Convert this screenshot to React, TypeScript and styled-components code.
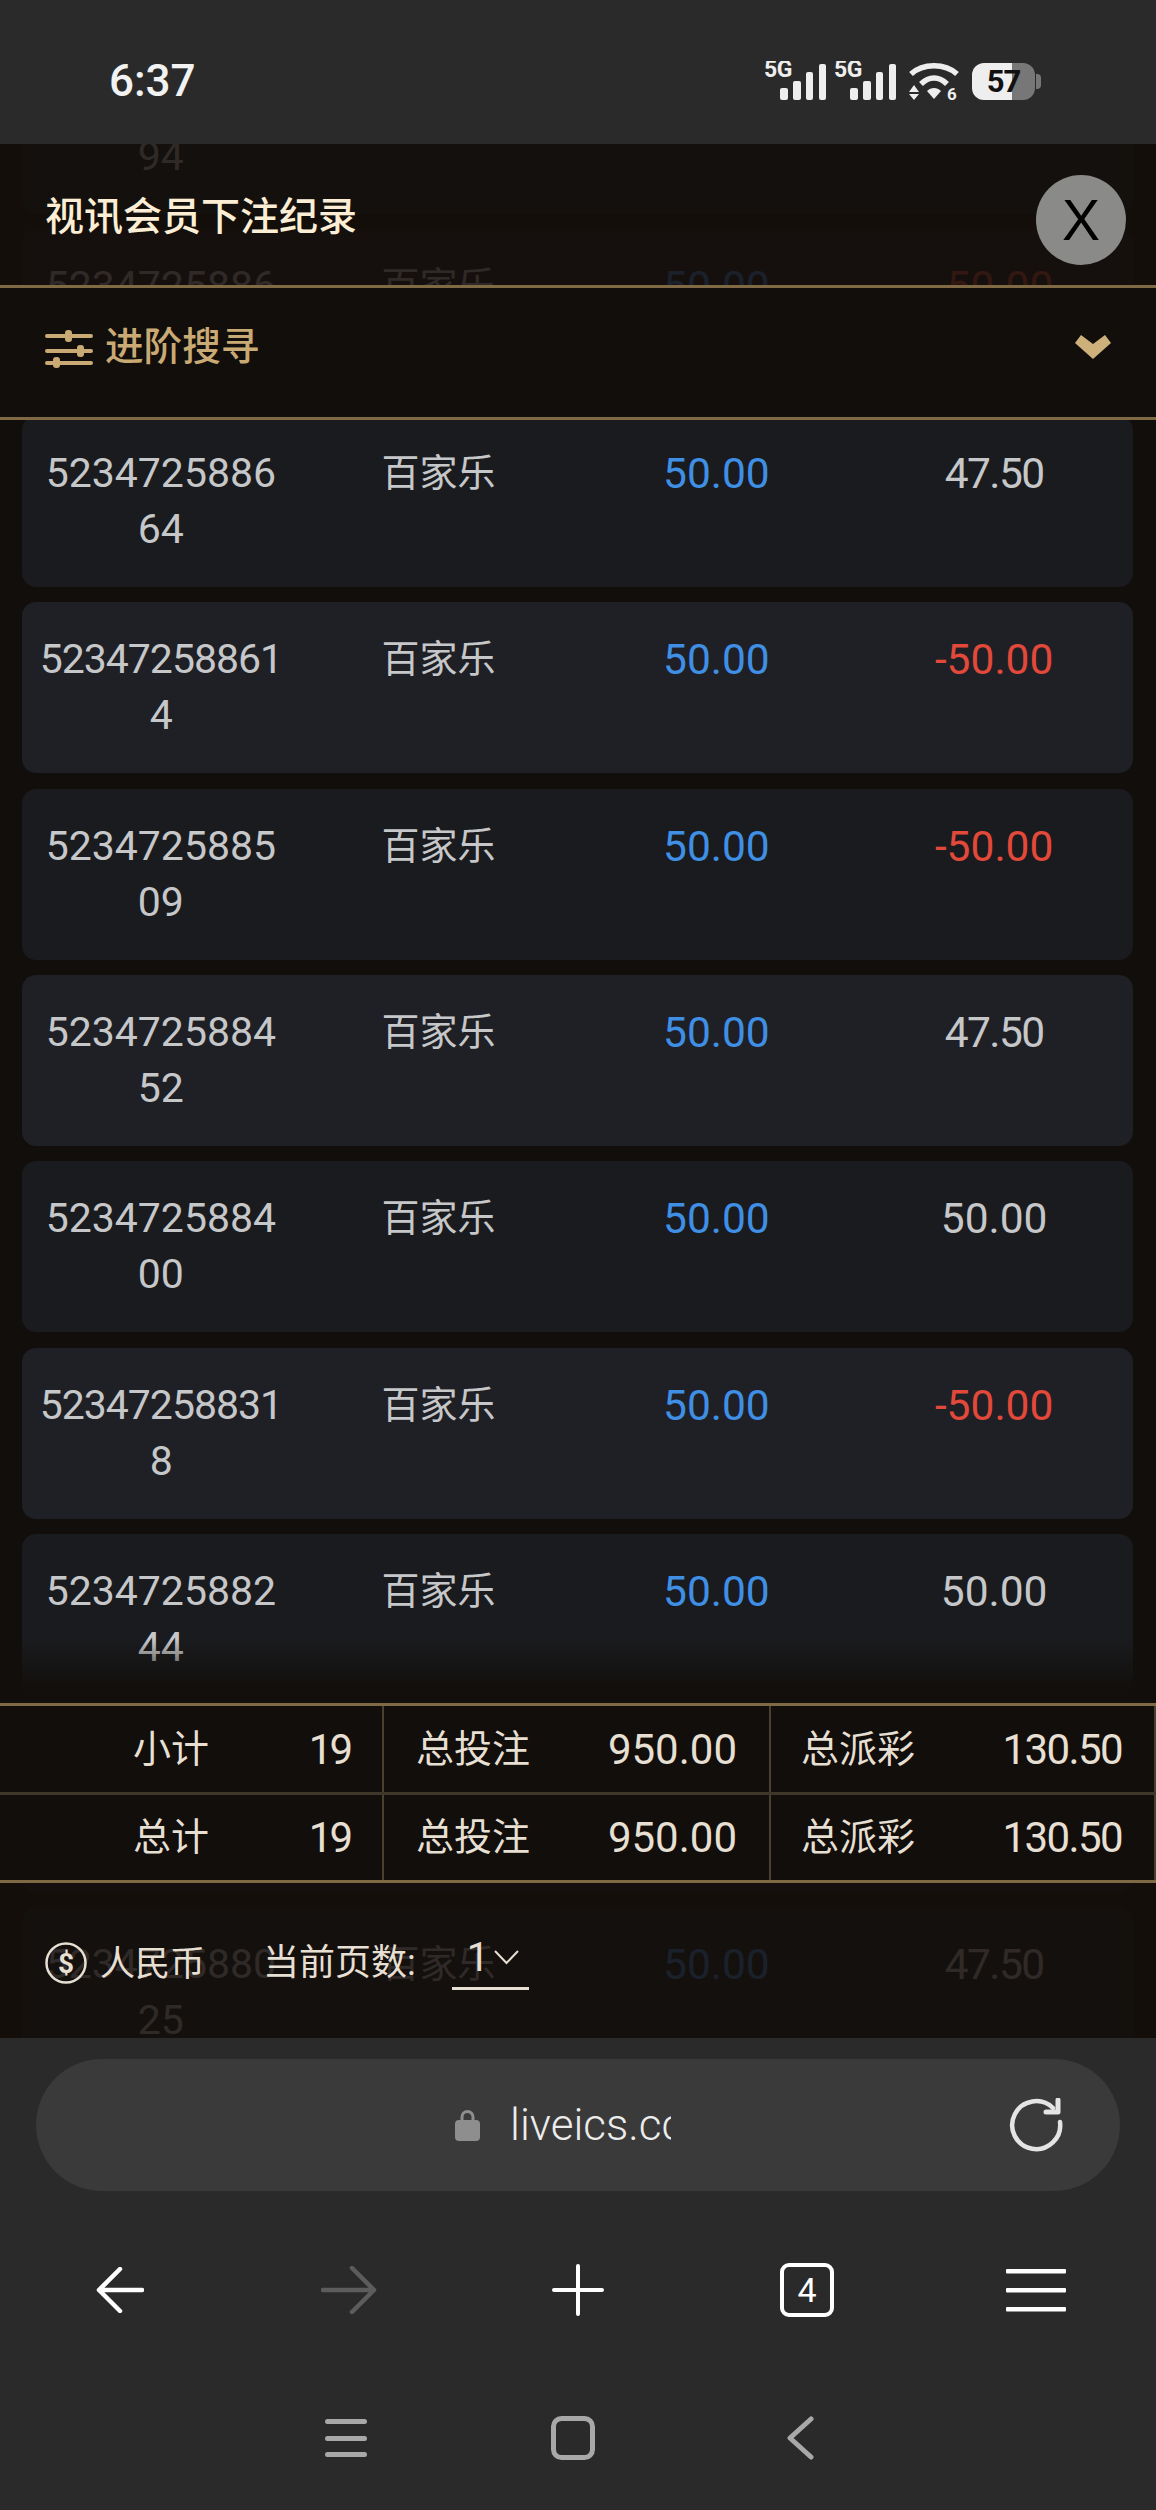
import styled, { createGlobalStyle } from 'styled-components'

const GlobalStyle = createGlobalStyle`
  html, body {
    margin: 0;
    padding: 0;
    background: #2a2a2a;
  }
`

const Phone = styled.div`
  width: 1156px;
  height: 2510px;
  display: flex;
  flex-direction: column;
  overflow: hidden;
  background: #2a2a2a;
  font-family: Roboto, 'Noto Sans CJK SC', sans-serif;
`

const StatusBar = styled.div`
  height: 144px;
  flex: none;
  box-sizing: border-box;
  padding: 18px 121px 0 109px;
  display: flex;
  justify-content: space-between;
  align-items: center;
  background: #2a2a2a;
  position: relative;
  z-index: 3;
`

const Clock = styled.div`
  font-size: 44px;
  font-weight: 500;
  color: #f2f2f2;
`

const StatusIcons = styled.div`
  display: flex;
  align-items: center;
  gap: 9px;
`

const Battery = styled.div`
  position: relative;
  width: 63px;
  height: 37px;
  margin-left: 3px;
  border-radius: 12px;
  background: linear-gradient(90deg, #eeeeee 63%, #777777 63%);
  color: #111;
  font-size: 31px;
  font-weight: 700;
  line-height: 38px;
  text-align: center;
  letter-spacing: -1px;

  &::after {
    content: '';
    position: absolute;
    right: -6px;
    top: 11px;
    width: 5px;
    height: 15px;
    border-radius: 0 4px 4px 0;
    background: #777777;
  }
`

const Stage = styled.div`
  position: relative;
  flex: 1;
  overflow: hidden;
  background: #110e0b;
`

const RowList = styled.div`
  margin-top: -101px;
  padding: 0 23px 0 22px;
  display: flex;
  flex-direction: column;
  gap: 15.4px;
`

const Row = styled.div<{ $alt: boolean }>`
  height: 171px;
  flex: none;
  box-sizing: border-box;
  padding-top: 29px;
  display: grid;
  grid-template-columns: repeat(4, 1fr);
  border-radius: 14px;
  background: ${(p) => (p.$alt ? '#1f2025' : '#1a1b1e')};
  text-align: center;
  font-size: 41px;
  line-height: 56px;
  color: #c6c7c9;
`

const OrderId = styled.div<{ $long: boolean }>`
  letter-spacing: ${(p) => (p.$long ? '-1px' : '0')};
`

const GameName = styled.div`
  font-size: 38px;
`

const BetAmount = styled.div`
  margin-top: 1px;
  font-size: 42.5px;
  color: #3f8fe5;
`

const Payout = styled.div<{ $loss: boolean; $narrow: boolean }>`
  margin-top: 1px;
  font-size: 42.5px;
  letter-spacing: ${(p) => (p.$narrow ? '-1.6px' : '0')};
  color: ${(p) => (p.$loss ? '#e2493a' : '#c6c7c9')};
`

const TopPanel = styled.div`
  position: absolute;
  top: 0;
  left: 0;
  right: 0;
`

const TitleBar = styled.div`
  height: 141px;
  box-sizing: border-box;
  padding: 10px 30px 0 45px;
  display: flex;
  justify-content: space-between;
  align-items: center;
  background: rgba(20, 14, 10, 0.85);
`

const Title = styled.div`
  margin-top: -14px;
  font-size: 39px;
  font-weight: 500;
  color: #fbeed5;
`

const CloseButton = styled.div`
  width: 90px;
  height: 90px;
  border-radius: 50%;
  background: #8a8a88;
  color: #000;
  font-family: 'Liberation Sans', sans-serif;
  font-size: 57px;
  line-height: 90px;
  text-align: center;
`

const SearchBar = styled.div`
  height: 135px;
  box-sizing: border-box;
  padding: 0 45px 8px 45px;
  display: flex;
  align-items: center;
  gap: 12px;
  border-top: 3px solid #7f6a45;
  border-bottom: 3px solid #7f6a45;
  background: #110e0b;
  color: #c9a974;
`

const SearchLabel = styled.span`
  padding-bottom: 12px;
  font-size: 38.6px;
  font-weight: 500;
`

const SearchChevron = styled.svg`
  margin: -4px 0 0 auto;
`

const BottomPanel = styled.div`
  position: absolute;
  left: 0;
  right: 0;
  bottom: 0;
`

const Fade = styled.div`
  height: 64px;
  background: linear-gradient(180deg, rgba(17, 14, 11, 0) 0%, #110e0b 85%);
`

const Summary = styled.div`
  border-top: 3px solid #7f6a45;
  border-bottom: 3px solid #7f6a45;
  background: #110e0b;
`

const SummaryRow = styled.div<{ $divided?: boolean }>`
  height: ${(p) => (p.$divided ? '89px' : '85px')};
  box-sizing: border-box;
  display: grid;
  grid-template-columns: 384px 387px 385px;
  border-bottom: ${(p) => (p.$divided ? '3px solid #3f3729' : 'none')};
`

const SummaryCell = styled.div<{ $inset?: number }>`
  box-sizing: border-box;
  padding: 0 32px 0 ${(p) => p.$inset ?? 32}px;
  display: flex;
  justify-content: space-between;
  align-items: center;
  border-right: 2px solid #4a4030;
  color: #e6dfd2;
  font-size: 42px;
`

const SummaryLabel = styled.span`
  padding-bottom: 8px;
  font-size: 38px;
`

const SummaryValue = styled.span<{ $tight?: number }>`
  letter-spacing: ${(p) => p.$tight ?? 0}px;
`

const Pager = styled.div`
  height: 155px;
  box-sizing: border-box;
  padding: 5px 0 0 45px;
  display: flex;
  align-items: center;
  background: rgba(20, 14, 10, 0.85);
  color: #e6dfd2;
  font-size: 35px;
`

const CurrencyLabel = styled.span`
  margin-left: 13px;
  margin-right: 58px;
  padding-bottom: 6px;
`

const PageLabel = styled.span`
  padding-bottom: 8px;
  font-size: 36px;
`

const PageSelect = styled.div`
  width: 77px;
  height: 54px;
  box-sizing: border-box;
  margin-left: 36px;
  padding: 0 10px 8px 15px;
  display: flex;
  justify-content: space-between;
  align-items: center;
  border-bottom: 3px solid #e6dfd2;
  font-size: 40px;
`

const BrowserChrome = styled.div`
  height: 472px;
  flex: none;
  box-sizing: border-box;
  padding-top: 21px;
  display: flex;
  flex-direction: column;
  background: #2a2a2a;
  position: relative;
  z-index: 3;
`

const UrlBar = styled.div`
  height: 132px;
  margin: 0 36px;
  padding: 0 57px 0 419px;
  display: flex;
  align-items: center;
  border-radius: 66px;
  background: #3a3a3a;
`

const UrlText = styled.div`
  width: 161px;
  margin-left: 30px;
  overflow: hidden;
  white-space: nowrap;
  font-size: 44px;
  font-weight: 350;
  color: #ececec;
`

const ReloadIcon = styled.svg`
  margin-left: auto;
`

const NavRow = styled.div`
  height: 100px;
  margin-top: 49px;
  padding: 0 70px;
  display: flex;
  justify-content: space-between;
`

const NavSlot = styled.div`
  width: 100px;
  height: 100px;
  display: flex;
  align-items: center;
  justify-content: center;
`

const TabCount = styled.div`
  width: 54px;
  height: 54px;
  box-sizing: border-box;
  border: 4px solid #fff;
  border-radius: 9px;
  color: #fff;
  font-size: 34px;
  line-height: 46px;
  text-align: center;
`

const SystemNav = styled.div`
  height: 80px;
  margin-top: 58px;
  padding-right: 10px;
  display: flex;
  justify-content: center;
  gap: 127px;
`

const SystemSlot = styled(NavSlot)`
  height: 80px;
`

const records = [
  { id: ['5234725886', '94'], pay: '50.00' },
  { id: ['5234725886', '32'], pay: '-50.00' },
  { id: ['5234725886', '64'], pay: '47.50' },
  { id: ['52347258861', '4'], pay: '-50.00' },
  { id: ['5234725885', '09'], pay: '-50.00' },
  { id: ['5234725884', '52'], pay: '47.50' },
  { id: ['5234725884', '00'], pay: '50.00' },
  { id: ['52347258831', '8'], pay: '-50.00' },
  { id: ['5234725882', '44'], pay: '50.00' },
  { id: ['5234725881', '70'], pay: '50.00' },
  { id: ['5234725880', '25'], pay: '47.50' },
]

const summary = [
  { label: '小计', count: '19' },
  { label: '总计', count: '19' },
]

const Signal = () => (
  <svg width="61" height="40" viewBox="0 0 61 40" fill="#eeeeee">
    <text x="-1" y="16" fontFamily="Roboto, sans-serif" fontSize="23" fontWeight="700" letterSpacing="-0.5">
      5G
    </text>
    <rect x="15" y="27" width="8" height="12" rx="2" />
    <rect x="28" y="20" width="8" height="19" rx="2" />
    <rect x="41" y="11" width="7" height="28" rx="2" />
    <rect x="54" y="3" width="7" height="36" rx="2" />
  </svg>
)

const Wifi = () => (
  <svg width="55" height="42" viewBox="0 0 55 42" fill="#eeeeee">
    <path d="M6 14C18 3 40 3 52 14" fill="none" stroke="#eeeeee" strokeWidth="5.5" />
    <path d="M16 24C24 16 34 16 42 24" fill="none" stroke="#eeeeee" strokeWidth="5.5" />
    <path d="M22 31C26 27 32 27 36 31L29 39Z" />
    <path d="M4 32H14L9 25ZM4 34H14L9 40Z" />
    <text x="42" y="40" fontFamily="Roboto, sans-serif" fontSize="17" fontWeight="700">
      6
    </text>
  </svg>
)

const SlidersIcon = () => (
  <svg width="48" height="38" viewBox="0 0 48 38" fill="#c9a974">
    <rect x="0" y="4" width="48" height="4" rx="2" />
    <rect x="0" y="19" width="48" height="4" rx="2" />
    <rect x="0" y="31" width="48" height="4" rx="2" />
    <rect x="20" y="0" width="7" height="12" rx="3" />
    <rect x="32" y="15" width="7" height="12" rx="3" />
    <rect x="8" y="27" width="7" height="11" rx="3" />
  </svg>
)

const DollarIcon = () => (
  <svg width="42" height="42" viewBox="0 0 42 42">
    <circle cx="21" cy="21" r="19.5" fill="none" stroke="#e6dfd2" strokeWidth="2.5" />
    <text
      x="21"
      y="31"
      textAnchor="middle"
      fontFamily="Roboto, sans-serif"
      fontSize="28"
      fontWeight="700"
      fill="#e6dfd2"
    >
      $
    </text>
  </svg>
)

const App = () => {
  return (
    <Phone>
      <GlobalStyle />
      <StatusBar>
        <Clock>6:37</Clock>
        <StatusIcons>
          <Signal />
          <Signal />
          <Wifi />
          <Battery>57</Battery>
        </StatusIcons>
      </StatusBar>

      <Stage>
        <RowList>
          {records.map((r, i) => (
            <Row key={i} $alt={i % 2 === 1}>
              <OrderId $long={r.id[0].length > 10}>
                {r.id[0]}
                <br />
                {r.id[1]}
              </OrderId>
              <GameName>百家乐</GameName>
              <BetAmount>50.00</BetAmount>
              <Payout $loss={r.pay.startsWith('-')} $narrow={r.pay === '47.50'}>
                {r.pay}
              </Payout>
            </Row>
          ))}
        </RowList>

        <TopPanel>
          <TitleBar>
            <Title>视讯会员下注纪录</Title>
            <CloseButton>X</CloseButton>
          </TitleBar>
          <SearchBar>
            <SlidersIcon />
            <SearchLabel>进阶搜寻</SearchLabel>
            <SearchChevron width="36" height="24" viewBox="0 0 36 24" fill="#cdb07a">
              <path d="M0 8L6 0L18 9L30 0L36 8L18 24Z" />
            </SearchChevron>
          </SearchBar>
        </TopPanel>

        <BottomPanel>
          <Fade />
          <Summary>
            {summary.map((s, i) => (
              <SummaryRow key={s.label} $divided={i === 0}>
                <SummaryCell $inset={133}>
                  <SummaryLabel>{s.label}</SummaryLabel>
                  <SummaryValue $tight={-3}>{s.count}</SummaryValue>
                </SummaryCell>
                <SummaryCell>
                  <SummaryLabel>总投注</SummaryLabel>
                  <SummaryValue>950.00</SummaryValue>
                </SummaryCell>
                <SummaryCell $inset={30}>
                  <SummaryLabel>总派彩</SummaryLabel>
                  <SummaryValue $tight={-1.6}>130.50</SummaryValue>
                </SummaryCell>
              </SummaryRow>
            ))}
          </Summary>
          <Pager>
            <DollarIcon />
            <CurrencyLabel>人民币</CurrencyLabel>
            <PageLabel>当前页数:</PageLabel>
            <PageSelect>
              1
              <svg width="25" height="15" viewBox="0 0 25 15" fill="none" stroke="#e6dfd2" strokeWidth="2">
                <path d="M1 1L12.5 13L24 1" />
              </svg>
            </PageSelect>
          </Pager>
        </BottomPanel>
      </Stage>

      <BrowserChrome>
        <UrlBar>
          <svg width="25" height="31" viewBox="0 0 25 31" fill="#8e8e8e">
            <path d="M7 12V7a5.5 5.5 0 0 1 11 0V12" fill="none" stroke="#8e8e8e" strokeWidth="3" />
            <rect x="0" y="10" width="25" height="21" rx="4" />
          </svg>
          <UrlText>liveics.cc</UrlText>
          <ReloadIcon width="54" height="54" viewBox="0 0 54 54" fill="none" stroke="#e4e4e4">
            <path d="M51 24A24 24 0 1 1 44 10" strokeWidth="4.5" strokeLinecap="round" />
            <path d="M49 2V14H37" fill="none" strokeWidth="5" strokeLinejoin="round" strokeLinecap="round" />
          </ReloadIcon>
        </UrlBar>

        <NavRow>
          <NavSlot>
            <svg width="48" height="46" viewBox="0 0 48 46" fill="none" stroke="#fff" strokeWidth="4.5" strokeLinecap="round" strokeLinejoin="round">
              <path d="M46 23H3M24 2L3 23L24 44" />
            </svg>
          </NavSlot>
          <NavSlot>
            <svg width="56" height="48" viewBox="0 0 56 48" fill="none" stroke="#5c5c5c" strokeWidth="4.5" strokeLinecap="round" strokeLinejoin="round">
              <path d="M2 24H53M31 2L53 24L31 46" />
            </svg>
          </NavSlot>
          <NavSlot>
            <svg width="52" height="52" viewBox="0 0 52 52" fill="none" stroke="#fff" strokeWidth="4" strokeLinecap="round">
              <path d="M26 2V50M2 26H50" />
            </svg>
          </NavSlot>
          <NavSlot>
            <TabCount>4</TabCount>
          </NavSlot>
          <NavSlot>
            <svg width="60" height="44" viewBox="0 0 60 44" fill="#fff">
              <rect x="0" y="1" width="60" height="4.5" rx="1" />
              <rect x="0" y="20" width="60" height="4.5" rx="1" />
              <rect x="0" y="39" width="60" height="4.5" rx="1" />
            </svg>
          </NavSlot>
        </NavRow>

        <SystemNav>
          <SystemSlot>
            <svg width="42" height="38" viewBox="0 0 42 38" fill="#a8a8a8">
              <rect x="0" y="0" width="42" height="5" rx="2.5" />
              <rect x="0" y="17" width="42" height="5" rx="2.5" />
              <rect x="0" y="33" width="42" height="5" rx="2.5" />
            </svg>
          </SystemSlot>
          <SystemSlot>
            <svg width="44" height="44" viewBox="0 0 44 44" fill="none" stroke="#a8a8a8" strokeWidth="5">
              <rect x="2.5" y="2.5" width="39" height="39" rx="8" />
            </svg>
          </SystemSlot>
          <SystemSlot>
            <svg width="28" height="44" viewBox="0 0 28 44" fill="none" stroke="#a8a8a8" strokeWidth="5" strokeLinecap="round" strokeLinejoin="round">
              <path d="M25 3L4 22L25 41" />
            </svg>
          </SystemSlot>
        </SystemNav>
      </BrowserChrome>
    </Phone>
  )
}

export default App
